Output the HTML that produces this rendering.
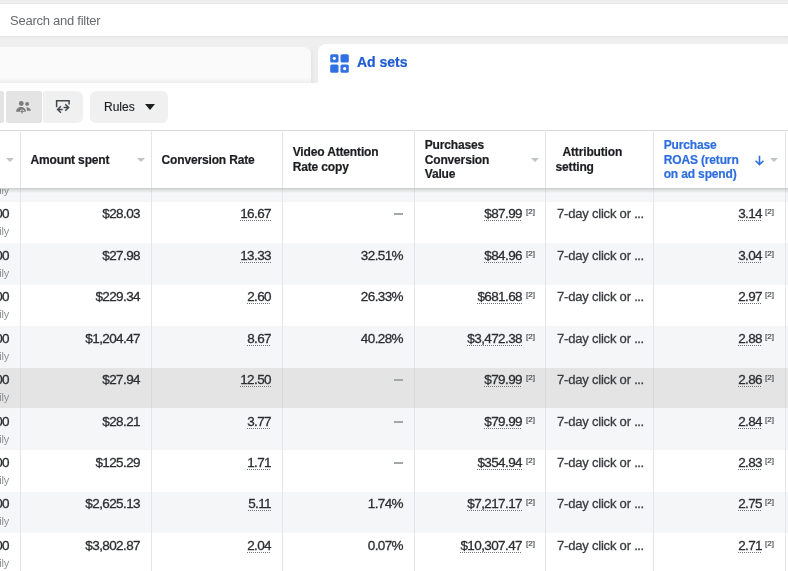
<!DOCTYPE html><html><head><meta charset="utf-8"><style>
*{margin:0;padding:0;box-sizing:border-box}
html,body{width:788px;height:571px;overflow:hidden;background:#fff}
body{position:relative;font-family:"Liberation Sans",sans-serif;color:#1c1e21}
.a{position:absolute}
.t{position:absolute;white-space:nowrap;line-height:1}
.r{text-align:right}
.h{font-weight:bold;font-size:12px;color:#1c1e21;letter-spacing:-0.15px;-webkit-text-stroke:0.2px currentColor}
.d{font-size:13.5px;color:#2b2d31;letter-spacing:-0.6px;-webkit-text-stroke:0.3px #2b2d31}
.u{background-image:linear-gradient(to right,#6f7378 50%,transparent 50%);background-size:2px 1px;background-repeat:repeat-x;background-position:0 100%}
.sup{font-size:8px;color:#4b4f56;-webkit-text-stroke:0.2px #4b4f56}
.tri{position:absolute;width:0;height:0;border-left:4px solid transparent;border-right:4px solid transparent;border-top:4px solid #bec3c9}
.vl{position:absolute;top:130px;width:1px;height:441px;background:#e3e5e8}
</style></head><body><div id="w" style="position:absolute;left:0;top:0;width:788px;height:571px;overflow:hidden;will-change:transform"><div class="a" style="left:0;top:0;width:788px;height:83px;background:#efefef"></div>
<div class="a" style="left:0;top:3px;width:788px;height:1px;background:#e6e6e6"></div>
<div class="a" style="left:0;top:4px;width:788px;height:32px;background:#fff"></div>
<div class="a" style="left:0;top:36px;width:788px;height:1px;background:#e3e3e3"></div>
<div class="a" style="left:0;top:37px;width:788px;height:2px;background:linear-gradient(#e9e9e9,#efefef)"></div>
<div class="t" style="left:10px;top:14px;font-size:13px;color:#67696d;letter-spacing:-0.25px">Search and filter</div>
<div class="a" style="left:0;top:47px;width:311px;height:36px;background:linear-gradient(#fafafa 0,#fafafa 31px,#ededed 36px);border-top-right-radius:8px"></div>
<div class="a" style="left:311px;top:47px;width:7px;height:36px;background:linear-gradient(to right,#e5e5e5,#efefef 60%,#ebebeb);-webkit-mask-image:linear-gradient(transparent,#000 10px)"></div>
<div class="a" style="left:318px;top:44px;width:470px;height:40px;background:#fff;border-top-left-radius:8px"></div>
<svg class="a" style="left:330px;top:54px" width="19" height="19" viewBox="0 0 19 19">
<g fill="#3170e4">
<rect x="0.2" y="0.2" width="8.3" height="8.3" rx="1.6"/>
<rect x="10.5" y="0.2" width="8.3" height="8.3" rx="1.6"/>
<rect x="0.2" y="10.5" width="8.3" height="8.3" rx="1.6"/>
<rect x="10.5" y="10.5" width="8.3" height="8.3" rx="1.6"/>
</g>
<circle cx="4.3" cy="4.3" r="1.6" fill="#fff"/>
<circle cx="14.7" cy="14.7" r="1.6" fill="#fff"/>
</svg>
<div class="t" style="left:357px;top:55px;font-size:14px;font-weight:bold;color:#1d5bd1;-webkit-text-stroke:0.2px #1d5bd1">Ad sets</div>
<div class="a" style="left:-4px;top:91px;width:8px;height:32px;background:#e4e4e4;border-radius:2px"></div>
<div class="a" style="left:6px;top:91px;width:36px;height:32px;background:#e4e4e4;border-radius:2px"></div>
<div class="a" style="left:43px;top:91px;width:40px;height:32px;background:#f0f0f0;border-radius:2px 6px 6px 2px"></div>
<div class="a" style="left:90px;top:91px;width:78px;height:32px;background:#f0f0f0;border-radius:6px"></div>
<div class="t" style="left:104px;top:101px;font-size:12px;color:#1c1e21;-webkit-text-stroke:0.15px #1c1e21">Rules</div>
<div class="a" style="left:145px;top:104px;width:0;height:0;border-left:5px solid transparent;border-right:5px solid transparent;border-top:6px solid #1c1e21"></div>
<svg class="a" style="left:13px;top:96px" width="22" height="22" viewBox="0 0 22 22">
<defs><mask id="pm"><rect width="22" height="22" fill="#fff"/><circle cx="9.06" cy="15.6" r="2.2" fill="#000"/></mask></defs>
<g fill="#7b7b7b">
<circle cx="8.3" cy="7.5" r="2.4"/><circle cx="14.1" cy="7.9" r="1.95"/>
<path mask="url(#pm)" d="M3.1 15.8 C3.1 12.8 5.5 11 8.1 11 C10.7 11 12.9 12.8 12.9 15.8 Z"/>
<path d="M13.3 11.2 C15.7 11.2 17.9 12.4 17.9 14.8 H13.9 C13.9 13.4 13.7 12 13.3 11.2 Z"/>
</g>
<path d="M9.06 13.6 V17.7 M7.3 15.6 H10.9" stroke="#7b7b7b" stroke-width="1"/>
</svg>
<svg class="a" style="left:52px;top:95px" width="22" height="22" viewBox="0 0 22 22">
<g fill="none" stroke="#44474d" stroke-width="1.5">
<path d="M4.6 12.2 V5.8 H17.1 V9.4"/>
<path d="M8.9 11.2 L5.6 14.45 L8.9 17.7 M5.6 14.45 H10.7"/>
<path d="M13.3 9.25 L16.6 12.5 L13.3 15.8 M16.6 12.5 H11.5"/>
</g>
</svg>
<div class="a" style="left:0;top:130px;width:788px;height:1px;background:#d9d9d9"></div>
<div class="a" style="left:0;top:188px;width:788px;height:14.00px;background:#f5f6f7"></div>
<div class="a" style="left:0;top:202px;width:788px;height:41px;background:#fff"></div>
<div class="a" style="left:0;top:243px;width:788px;height:42px;background:#f5f6f7"></div>
<div class="a" style="left:0;top:285px;width:788px;height:41px;background:#fff"></div>
<div class="a" style="left:0;top:326px;width:788px;height:42px;background:#f5f6f7"></div>
<div class="a" style="left:0;top:368px;width:788px;height:40px;background:#e4e4e4"></div>
<div class="a" style="left:0;top:408px;width:788px;height:42px;background:#f5f6f7"></div>
<div class="a" style="left:0;top:450px;width:788px;height:42px;background:#fff"></div>
<div class="a" style="left:0;top:492px;width:788px;height:41px;background:#f5f6f7"></div>
<div class="a" style="left:0;top:533px;width:788px;height:41px;background:#fff"></div>
<div class="vl" style="left:20px"></div>
<div class="a" style="left:20px;top:368px;width:1px;height:40px;background:#d8d9db"></div>
<div class="vl" style="left:151px"></div>
<div class="a" style="left:151px;top:368px;width:1px;height:40px;background:#d8d9db"></div>
<div class="vl" style="left:282px"></div>
<div class="a" style="left:282px;top:368px;width:1px;height:40px;background:#d8d9db"></div>
<div class="vl" style="left:414px"></div>
<div class="a" style="left:414px;top:368px;width:1px;height:40px;background:#d8d9db"></div>
<div class="vl" style="left:545px"></div>
<div class="a" style="left:545px;top:368px;width:1px;height:40px;background:#d8d9db"></div>
<div class="vl" style="left:653px"></div>
<div class="a" style="left:653px;top:368px;width:1px;height:40px;background:#d8d9db"></div>
<div class="vl" style="left:785px"></div>
<div class="a" style="left:785px;top:368px;width:1px;height:40px;background:#d8d9db"></div>
<div class="t d r" style="right:779px;top:207px">$30.00</div>
<div class="t r" style="right:779px;top:226px;font-size:11px;color:#8e9196;letter-spacing:-0.2px">Daily</div>
<div class="t d r" style="right:648px;top:207px">$28.03</div>
<div class="t d r u" style="right:517px;top:207px">16.67</div>
<div class="a" style="left:394px;top:213px;width:9px;height:2px;background:#a3a6ab"></div>
<div class="t d r u" style="right:266px;top:207px">$87.99</div>
<div class="t sup" style="left:526px;top:208px">[2]</div>
<div class="t d" style="left:557px;top:207px;color:#3a3c40;font-size:13px;letter-spacing:-0.2px;-webkit-text-stroke:0.3px #3a3c40">7-day click or <span style="letter-spacing:-0.5px">...</span></div>
<div class="t d r u" style="right:26px;top:207px">3.14</div>
<div class="t sup" style="left:765px;top:208px">[2]</div>
<div class="t d r" style="right:779px;top:249px">$30.00</div>
<div class="t r" style="right:779px;top:268px;font-size:11px;color:#8e9196;letter-spacing:-0.2px">Daily</div>
<div class="t d r" style="right:648px;top:249px">$27.98</div>
<div class="t d r u" style="right:517px;top:249px">13.33</div>
<div class="t d r" style="right:385px;top:249px">32.51%</div>
<div class="t d r u" style="right:266px;top:249px">$84.96</div>
<div class="t sup" style="left:526px;top:250px">[2]</div>
<div class="t d" style="left:557px;top:249px;color:#3a3c40;font-size:13px;letter-spacing:-0.2px;-webkit-text-stroke:0.3px #3a3c40">7-day click or <span style="letter-spacing:-0.5px">...</span></div>
<div class="t d r u" style="right:26px;top:249px">3.04</div>
<div class="t sup" style="left:765px;top:250px">[2]</div>
<div class="t d r" style="right:779px;top:290px">$30.00</div>
<div class="t r" style="right:779px;top:309px;font-size:11px;color:#8e9196;letter-spacing:-0.2px">Daily</div>
<div class="t d r" style="right:648px;top:290px">$229.34</div>
<div class="t d r u" style="right:517px;top:290px">2.60</div>
<div class="t d r" style="right:385px;top:290px">26.33%</div>
<div class="t d r u" style="right:266px;top:290px">$681.68</div>
<div class="t sup" style="left:526px;top:291px">[2]</div>
<div class="t d" style="left:557px;top:290px;color:#3a3c40;font-size:13px;letter-spacing:-0.2px;-webkit-text-stroke:0.3px #3a3c40">7-day click or <span style="letter-spacing:-0.5px">...</span></div>
<div class="t d r u" style="right:26px;top:290px">2.97</div>
<div class="t sup" style="left:765px;top:291px">[2]</div>
<div class="t d r" style="right:779px;top:332px">$30.00</div>
<div class="t r" style="right:779px;top:351px;font-size:11px;color:#8e9196;letter-spacing:-0.2px">Daily</div>
<div class="t d r" style="right:648px;top:332px">$1,204.47</div>
<div class="t d r u" style="right:517px;top:332px">8.67</div>
<div class="t d r" style="right:385px;top:332px">40.28%</div>
<div class="t d r u" style="right:266px;top:332px">$3,472.38</div>
<div class="t sup" style="left:526px;top:333px">[2]</div>
<div class="t d" style="left:557px;top:332px;color:#3a3c40;font-size:13px;letter-spacing:-0.2px;-webkit-text-stroke:0.3px #3a3c40">7-day click or <span style="letter-spacing:-0.5px">...</span></div>
<div class="t d r u" style="right:26px;top:332px">2.88</div>
<div class="t sup" style="left:765px;top:333px">[2]</div>
<div class="t d r" style="right:779px;top:373px">$30.00</div>
<div class="t r" style="right:779px;top:392px;font-size:11px;color:#8e9196;letter-spacing:-0.2px">Daily</div>
<div class="t d r" style="right:648px;top:373px">$27.94</div>
<div class="t d r u" style="right:517px;top:373px">12.50</div>
<div class="a" style="left:394px;top:379px;width:9px;height:2px;background:#a3a6ab"></div>
<div class="t d r u" style="right:266px;top:373px">$79.99</div>
<div class="t sup" style="left:526px;top:374px">[2]</div>
<div class="t d" style="left:557px;top:373px;color:#3a3c40;font-size:13px;letter-spacing:-0.2px;-webkit-text-stroke:0.3px #3a3c40">7-day click or <span style="letter-spacing:-0.5px">...</span></div>
<div class="t d r u" style="right:26px;top:373px">2.86</div>
<div class="t sup" style="left:765px;top:374px">[2]</div>
<div class="t d r" style="right:779px;top:415px">$30.00</div>
<div class="t r" style="right:779px;top:434px;font-size:11px;color:#8e9196;letter-spacing:-0.2px">Daily</div>
<div class="t d r" style="right:648px;top:415px">$28.21</div>
<div class="t d r u" style="right:517px;top:415px">3.77</div>
<div class="a" style="left:394px;top:421px;width:9px;height:2px;background:#a3a6ab"></div>
<div class="t d r u" style="right:266px;top:415px">$79.99</div>
<div class="t sup" style="left:526px;top:416px">[2]</div>
<div class="t d" style="left:557px;top:415px;color:#3a3c40;font-size:13px;letter-spacing:-0.2px;-webkit-text-stroke:0.3px #3a3c40">7-day click or <span style="letter-spacing:-0.5px">...</span></div>
<div class="t d r u" style="right:26px;top:415px">2.84</div>
<div class="t sup" style="left:765px;top:416px">[2]</div>
<div class="t d r" style="right:779px;top:456px">$30.00</div>
<div class="t r" style="right:779px;top:475px;font-size:11px;color:#8e9196;letter-spacing:-0.2px">Daily</div>
<div class="t d r" style="right:648px;top:456px">$125.29</div>
<div class="t d r u" style="right:517px;top:456px">1.71</div>
<div class="a" style="left:394px;top:462px;width:9px;height:2px;background:#a3a6ab"></div>
<div class="t d r u" style="right:266px;top:456px">$354.94</div>
<div class="t sup" style="left:526px;top:457px">[2]</div>
<div class="t d" style="left:557px;top:456px;color:#3a3c40;font-size:13px;letter-spacing:-0.2px;-webkit-text-stroke:0.3px #3a3c40">7-day click or <span style="letter-spacing:-0.5px">...</span></div>
<div class="t d r u" style="right:26px;top:456px">2.83</div>
<div class="t sup" style="left:765px;top:457px">[2]</div>
<div class="t d r" style="right:779px;top:497px">$30.00</div>
<div class="t r" style="right:779px;top:516px;font-size:11px;color:#8e9196;letter-spacing:-0.2px">Daily</div>
<div class="t d r" style="right:648px;top:497px">$2,625.13</div>
<div class="t d r u" style="right:517px;top:497px">5.11</div>
<div class="t d r" style="right:385px;top:497px">1.74%</div>
<div class="t d r u" style="right:266px;top:497px">$7,217.17</div>
<div class="t sup" style="left:526px;top:498px">[2]</div>
<div class="t d" style="left:557px;top:497px;color:#3a3c40;font-size:13px;letter-spacing:-0.2px;-webkit-text-stroke:0.3px #3a3c40">7-day click or <span style="letter-spacing:-0.5px">...</span></div>
<div class="t d r u" style="right:26px;top:497px">2.75</div>
<div class="t sup" style="left:765px;top:498px">[2]</div>
<div class="t d r" style="right:779px;top:539px">$30.00</div>
<div class="t r" style="right:779px;top:558px;font-size:11px;color:#8e9196;letter-spacing:-0.2px">Daily</div>
<div class="t d r" style="right:648px;top:539px">$3,802.87</div>
<div class="t d r u" style="right:517px;top:539px">2.04</div>
<div class="t d r" style="right:385px;top:539px">0.07%</div>
<div class="t d r u" style="right:266px;top:539px">$10,307.47</div>
<div class="t sup" style="left:526px;top:540px">[2]</div>
<div class="t d" style="left:557px;top:539px;color:#3a3c40;font-size:13px;letter-spacing:-0.2px;-webkit-text-stroke:0.3px #3a3c40">7-day click or <span style="letter-spacing:-0.5px">...</span></div>
<div class="t d r u" style="right:26px;top:539px">2.71</div>
<div class="t sup" style="left:765px;top:540px">[2]</div>
<div class="t r" style="right:779px;top:185px;font-size:11px;color:#8e9196;letter-spacing:-0.2px">Daily</div>
<div class="a" style="left:0;top:131px;width:788px;height:57px;background:#fff"></div>
<div class="a" style="left:20px;top:131px;width:1px;height:57px;background:#e3e5e8"></div>
<div class="a" style="left:151px;top:131px;width:1px;height:57px;background:#e3e5e8"></div>
<div class="a" style="left:282px;top:131px;width:1px;height:57px;background:#e3e5e8"></div>
<div class="a" style="left:414px;top:131px;width:1px;height:57px;background:#e3e5e8"></div>
<div class="a" style="left:545px;top:131px;width:1px;height:57px;background:#e3e5e8"></div>
<div class="a" style="left:653px;top:131px;width:1px;height:57px;background:#e3e5e8"></div>
<div class="a" style="left:785px;top:131px;width:1px;height:57px;background:#e3e5e8"></div>
<div class="a" style="left:0;top:188px;width:788px;height:1px;background:#cfcfcf"></div>
<div class="a" style="left:0;top:189px;width:788px;height:4px;background:linear-gradient(rgba(0,0,0,0.12),rgba(0,0,0,0))"></div>
<div class="t h" style="left:30.5px;top:154px;">Amount spent</div>
<div class="t h" style="left:161.5px;top:154px;">Conversion Rate</div>
<div class="t h" style="left:292.7px;top:145px;line-height:15px">Video Attention<br>Rate copy</div>
<div class="t h" style="left:424.7px;top:138px;line-height:14.5px">Purchases<br>Conversion<br>Value</div>
<div class="t h" style="left:555.5px;top:145px;line-height:15px"><span style="padding-left:7px">Attribution</span><br>setting</div>
<div class="t h" style="left:663.7px;top:138px;line-height:14.5px;color:#2e6fdf">Purchase<br>ROAS (return<br>on ad spend)</div>
<div class="tri" style="left:6px;top:158px"></div>
<div class="tri" style="left:137px;top:158px"></div>
<div class="tri" style="left:531px;top:158px"></div>
<div class="tri" style="left:770px;top:158px"></div>
<svg class="a" style="left:754px;top:155px" width="11" height="11" viewBox="0 0 11 11">
<path d="M5.5 0.8 V9.6 M1.6 5.8 L5.5 9.6 L9.4 5.8" fill="none" stroke="#2e6fdf" stroke-width="1.6"/></svg></div></body></html>
